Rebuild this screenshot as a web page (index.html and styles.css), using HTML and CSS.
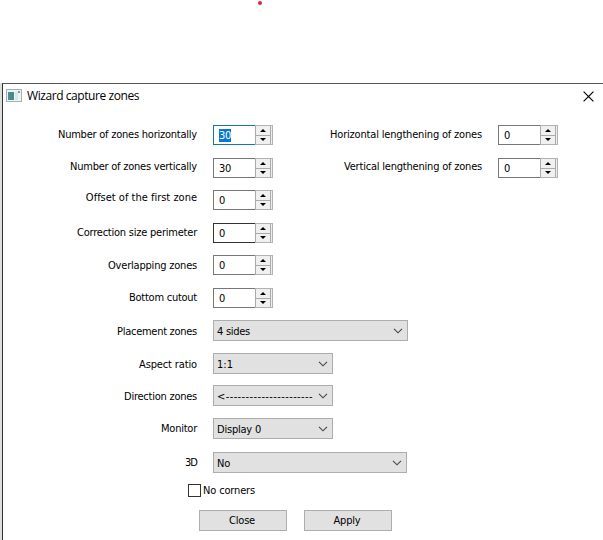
FILE: index.html
```
<!DOCTYPE html>
<html lang="en">
<head>
<meta charset="utf-8">
<title>Wizard capture zones</title>
<link rel="stylesheet" href="styles.css">
</head>
<body>
<div class="backdrop"><span class="dot"></span></div>
<main class="dialog">
  <header class="titlebar">
    <svg class="app-icon" width="16" height="14" viewBox="0 0 16 14"><rect x=".5" y=".5" width="15" height="12" fill="#edf2f4" stroke="#a5b0b5"/><rect x="2" y="3" width="6" height="8" fill="#438f87"/><path d="M2 3h2v8H2z" fill="#5c86a0"/><path d="M9 3h3v8H9z" fill="#dce5e8"/><path d="M12 2h2v2h-2z" fill="#7d9990"/></svg>
    <h1 class="title"><span class="fit" data-w="112">Wizard capture zones</span></h1>
    <svg class="close" width="11" height="11" viewBox="0 0 11 11"><path d="M.6.6l9.8 9.8M10.4.6L.6 10.4" fill="none" stroke="#000" stroke-width="1.15"/></svg>
  </header>
  <form class="form">
    <div class="row">
      <label class="label"><span class="fit" data-w="139">Number of zones horizontally</span></label>
      <div class="spin focused"><span class="value"><span class="fit" data-w="12">30</span></span><span class="arrows"><i class="up"></i><i class="down"></i></span></div>
      <label class="label second"><span class="fit" data-w="152">Horizontal lengthening of zones</span></label>
      <div class="spin"><span class="value">0</span><span class="arrows"><i class="up"></i><i class="down"></i></span></div>
    </div>
    <div class="row raised">
      <label class="label"><span class="fit" data-w="127">Number of zones vertically</span></label>
      <div class="spin"><span class="value"><span class="fit" data-w="12">30</span></span><span class="arrows"><i class="up"></i><i class="down"></i></span></div>
      <label class="label second"><span class="fit" data-w="138">Vertical lengthening of zones</span></label>
      <div class="spin"><span class="value">0</span><span class="arrows"><i class="up"></i><i class="down"></i></span></div>
    </div>
    <div class="row high">
      <label class="label"><span class="fit" data-w="111">Offset of the first zone</span></label>
      <div class="spin"><span class="value">0</span><span class="arrows"><i class="up"></i><i class="down"></i></span></div>
    </div>
    <div class="row">
      <label class="label"><span class="fit" data-w="120">Correction size perimeter</span></label>
      <div class="spin dark"><span class="value">0</span><span class="arrows"><i class="up"></i><i class="down"></i></span></div>
    </div>
    <div class="row low">
      <label class="label"><span class="fit" data-w="89">Overlapping zones</span></label>
      <div class="spin"><span class="value">0</span><span class="arrows"><i class="up"></i><i class="down"></i></span></div>
    </div>
    <div class="row">
      <label class="label"><span class="fit" data-w="68">Bottom cutout</span></label>
      <div class="spin"><span class="value">0</span><span class="arrows"><i class="up"></i><i class="down"></i></span></div>
    </div>
    <div class="row pick">
      <label class="label"><span class="fit" data-w="80">Placement zones</span></label>
      <div class="select wide"><span class="fit" data-w="33">4 sides</span><svg class="chevron" viewBox="0 0 10 6"><path d="M1 .8l4 4 4-4"/></svg></div>
    </div>
    <div class="row pick">
      <label class="label"><span class="fit" data-w="58">Aspect ratio</span></label>
      <div class="select"><span class="fit" data-w="16">1:1</span><svg class="chevron" viewBox="0 0 10 6"><path d="M1 .8l4 4 4-4"/></svg></div>
    </div>
    <div class="row pick">
      <label class="label"><span class="fit" data-w="73">Direction zones</span></label>
      <div class="select"><span class="fit" data-w="96">&lt;----------------------</span><svg class="chevron" viewBox="0 0 10 6"><path d="M1 .8l4 4 4-4"/></svg></div>
    </div>
    <div class="row pick">
      <label class="label"><span class="fit" data-w="36">Monitor</span></label>
      <div class="select"><span class="fit" data-w="44">Display 0</span><svg class="chevron" viewBox="0 0 10 6"><path d="M1 .8l4 4 4-4"/></svg></div>
    </div>
    <div class="row pick">
      <label class="label"><span class="fit" data-w="12">3D</span></label>
      <div class="select wide last"><span class="fit" data-w="13">No</span><svg class="chevron" viewBox="0 0 10 6"><path d="M1 .8l4 4 4-4"/></svg></div>
    </div>
    <label class="check"><span class="box"></span><span class="fit" data-w="52">No corners</span></label>
    <div class="actions">
      <button class="button" type="button"><span class="fit" data-w="26">Close</span></button>
      <button class="button" type="button"><span class="fit" data-w="27">Apply</span></button>
    </div>
  </form>
</main>
<script src="fit.js"></script>
</body>
</html>
```
FILE: fit.js
```
document.querySelectorAll('.fit').forEach(function (el) {
  var extra = Number(el.dataset.w) - el.getBoundingClientRect().width;
  el.style.letterSpacing = extra / el.textContent.length + 'px';
});
```
FILE: styles.css
```
* { box-sizing: border-box; }
body { margin: 0; height: 540px; overflow: hidden; background: #fff; color: #000; font: 11px/14px "DejaVu Sans Condensed", "DejaVu Sans", sans-serif; }
.backdrop { display: flex; height: 83px; padding-left: 258px; }
.dot { display: block; width: 4px; height: 4px; border-radius: 2px; background: #df2635; margin-top: 1px; }
.dialog { height: 457px; margin-left: 2px; border-top: 1px solid #555; border-left: 1px solid #333; box-shadow: -2px 0 0 #dedede; }
.titlebar { display: flex; align-items: center; height: 24px; padding: 0 9px 0 3px; }
.title { margin: 0 auto 0 5px; font: 12px/16px "Open Sans", sans-serif; }
.app-icon { display: block; }
.fit { white-space: pre; }
.form { padding-top: 17px; }
.row { display: flex; align-items: center; height: 20px; margin-bottom: 13px; }
.row:nth-child(2), .row:nth-child(4) { margin-bottom: 12px; }
.label { width: 194px; text-align: right; margin-right: 16px; position: relative; top: 0; white-space: nowrap; }
.label.second { width: 209px; }
.raised .label { top: -1px; }
.high .label { top: -2px; }
.low .label, .pick .label { top: 1px; }
.row:nth-child(n+10) .label { top: 0; }
.spin { display: flex; width: 60px; height: 20px; border: 1px solid #b2b2b2; background: #fff; }
.spin .value { width: 42px; height: 20px; margin: -1px 0 0 -1px; padding: 3px 0 0 5px; border: 1px solid #777; border-right: 0; }
.spin.dark .value { border-color: #333; }
.spin.focused .value { border-color: #1674b9; }
.focused .fit { background: #0878d0; color: #fff; }
.arrows { display: flex; flex-direction: column; gap: 1px; width: 17px; background: #aaa; border-right: 1px solid #eee; }
.arrows i { flex: 1; display: flex; align-items: center; justify-content: center; background: #f0f0f0; border-left: 1px solid #aaa; border-right: 1px solid #aaa; }
.arrows i::before { content: ""; border: 3px solid transparent; border-top: 0; border-bottom: 3px solid #000; }
.arrows .down::before { border-bottom: 0; border-top: 3px solid #000; }
.row.pick { height: 21px; margin-bottom: 12px; }
.row:nth-child(6) { margin-bottom: 12px; }
.row.pick:nth-child(8) { margin-bottom: 11px; }
.row.pick:nth-child(10) { margin-bottom: 13px; }
.select { display: flex; align-items: center; justify-content: space-between; width: 120px; height: 21px; padding: 0 4px 0 3px; border: 1px solid #adadad; background: #e1e1e1; }
.select .fit { padding-top: 2px; }
.select.wide { width: 195px; }
.select.last { width: 194px; }
.chevron { width: 10px; height: 6px; flex: none; fill: none; stroke: #444; stroke-width: 1.1; }
.check { display: flex; align-items: center; gap: 2px; height: 13px; margin: -1px 0 0 185px; }
.box { width: 13px; height: 13px; border: 1px solid #333; background: #fff; }
.actions { display: flex; gap: 17px; margin: 13px 0 0 196px; }
.button { width: 88px; height: 21px; padding: 1px 2px 0 0; border: 1px solid #adadad; background: #e1e1e1; color: #000; font: inherit; }
```
